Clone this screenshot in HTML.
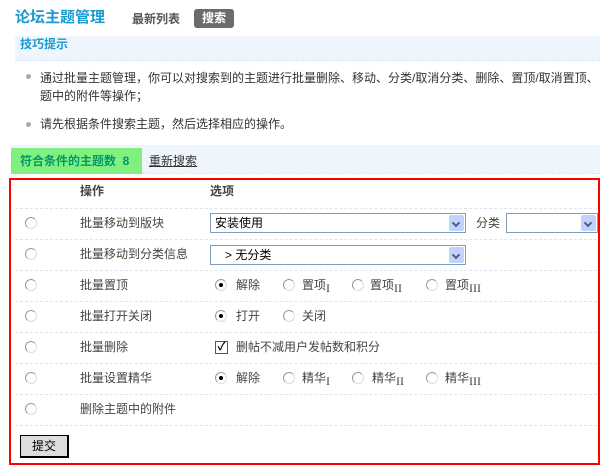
<!DOCTYPE html>
<html><head><meta charset="utf-8"><style>
body{margin:0;width:600px;height:466px;overflow:hidden;background:#fff;font-family:"Liberation Sans","Noto Sans CJK SC","WenQuanYi Zen Hei",sans-serif;font-size:12px;color:#444;position:relative}
.a{position:absolute;white-space:nowrap;line-height:14px}
.r{position:absolute;width:10px;height:10px;border:1px solid #999;border-radius:50%;background:#fff;border-right-color:#ddd;border-bottom-color:#ddd}
.r.on:after{content:"";position:absolute;left:3px;top:3px;width:4px;height:4px;border-radius:50%;background:#000}
.dl{position:absolute;left:15px;width:582px;border-top:1px dashed #d6e8f6;height:0}
.sel{position:absolute;height:18px;border:1px solid #7f9db9;background:#fff}
.sel .b{position:absolute;right:1px;top:1px;width:15px;height:16px;background:#c1d3fb;border-radius:2px}
.sel .b:after{content:"";position:absolute;left:4px;top:5px;width:4px;height:4px;border-right:2px solid #4d6185;border-bottom:2px solid #4d6185;transform:rotate(45deg)}
sub{font-size:12px;vertical-align:-3px;font-family:"Liberation Serif",serif}
</style></head><body>
<div class="a" style="left:15px;top:9px;font-size:15px;font-weight:bold;color:#1b9ad0;line-height:18px">论坛主题管理</div>
<div class="a" style="left:132px;top:12px;font-weight:bold;color:#555">最新列表</div>
<div class="a" style="left:194px;top:9px;width:40px;height:19px;background:#6b6b6b;border-radius:3px;color:#fff;font-weight:bold;text-align:center;line-height:19px">搜索</div>
<div style="position:absolute;left:15px;top:36px;width:585px;height:24px;background:#eff5fc;border-bottom:1px dashed #d6e8f6"></div>
<div class="a" style="left:20px;top:37px;font-weight:bold;color:#1b9ad0">技巧提示</div>
<div style="position:absolute;left:26px;top:74px;width:5px;height:5px;border-radius:50%;background:#aaa"></div>
<div class="a" style="left:40px;top:69px;line-height:18px;color:#333">通过批量主题管理，你可以对搜索到的主题进行批量删除、移动、分类/取消分类、删除、置顶/取消置顶、<br>题中的附件等操作；</div>
<div style="position:absolute;left:26px;top:122px;width:5px;height:5px;border-radius:50%;background:#aaa"></div>
<div class="a" style="left:40px;top:117px;color:#333">请先根据条件搜索主题，然后选择相应的操作。</div>
<div style="position:absolute;left:11px;top:145px;width:589px;height:28px;background:#eff5fc;border-bottom:1px dashed #d6e8f6"></div>
<div style="position:absolute;left:11px;top:148px;width:131px;height:26px;background:#80f080"></div>
<div class="a" style="left:20px;top:154px;font-weight:bold;color:#009966">符合条件的主题数 &nbsp;8</div>
<div class="a" style="left:149px;top:154px;color:#333;text-decoration:underline">重新搜索</div>
<div style="position:absolute;left:9px;top:178px;width:587px;height:283px;border:2px solid #f00"></div>
<div class="a" style="left:80px;top:184px;font-weight:bold">操作</div>
<div class="a" style="left:210px;top:184px;font-weight:bold">选项</div>
<div class="dl" style="top:208px"></div><div class="dl" style="top:239px"></div><div class="dl" style="top:270px"></div><div class="dl" style="top:301px"></div><div class="dl" style="top:332px"></div><div class="dl" style="top:363px"></div><div class="dl" style="top:394px"></div><div class="dl" style="top:425px"></div>
<div class="r" style="left:25px;top:217px"></div><div class="a" style="left:80px;top:216px">批量移动到版块</div>
<div class="sel" style="left:210px;top:213px;width:254px"><span class="a" style="left:4px;top:2px;color:#000">安装使用</span><div class="b"></div></div>
<div class="a" style="left:476px;top:216px">分类</div>
<div class="sel" style="left:506px;top:213px;width:90px"><div class="b"></div></div>
<div class="r" style="left:25px;top:248px"></div><div class="a" style="left:80px;top:247px">批量移动到分类信息</div>
<div class="sel" style="left:210px;top:245px;width:254px"><span class="a" style="left:14px;top:2px;color:#000">&gt; 无分类</span><div class="b"></div></div>
<div class="r" style="left:25px;top:279px"></div><div class="a" style="left:80px;top:278px">批量置顶</div>
<div class="r on" style="left:215px;top:279px"></div><div class="a" style="left:236px;top:278px">解除</div>
<div class="r" style="left:283px;top:279px"></div><div class="a" style="left:302px;top:278px">置项<sub>I</sub></div>
<div class="r" style="left:352px;top:279px"></div><div class="a" style="left:370px;top:278px">置项<sub>II</sub></div>
<div class="r" style="left:426px;top:279px"></div><div class="a" style="left:445px;top:278px">置项<sub>III</sub></div>
<div class="r" style="left:25px;top:310px"></div><div class="a" style="left:80px;top:309px">批量打开关闭</div>
<div class="r on" style="left:215px;top:310px"></div><div class="a" style="left:236px;top:309px">打开</div>
<div class="r" style="left:283px;top:310px"></div><div class="a" style="left:302px;top:309px">关闭</div>
<div class="r" style="left:25px;top:341px"></div><div class="a" style="left:80px;top:340px">批量删除</div>
<div style="position:absolute;left:215px;top:341px;width:11px;height:11px;border:1px solid #555;background:#fff;font-size:11px;line-height:11px;text-align:center;color:#000;font-weight:bold">✓</div><div class="a" style="left:236px;top:340px">删帖不减用户发帖数和积分</div>
<div class="r" style="left:25px;top:372px"></div><div class="a" style="left:80px;top:371px">批量设置精华</div>
<div class="r on" style="left:215px;top:372px"></div><div class="a" style="left:236px;top:371px">解除</div>
<div class="r" style="left:283px;top:372px"></div><div class="a" style="left:302px;top:371px">精华<sub>I</sub></div>
<div class="r" style="left:352px;top:372px"></div><div class="a" style="left:372px;top:371px">精华<sub>II</sub></div>
<div class="r" style="left:426px;top:372px"></div><div class="a" style="left:445px;top:371px">精华<sub>III</sub></div>
<div class="r" style="left:25px;top:403px"></div><div class="a" style="left:80px;top:402px">删除主题中的附件</div>
<div style="position:absolute;left:20px;top:435px;width:46px;height:20px;border:1px solid #000;border-right-width:2px;border-bottom-width:2px;background:#ddd;text-align:center;line-height:20px;color:#000">提交</div>
</body></html>
